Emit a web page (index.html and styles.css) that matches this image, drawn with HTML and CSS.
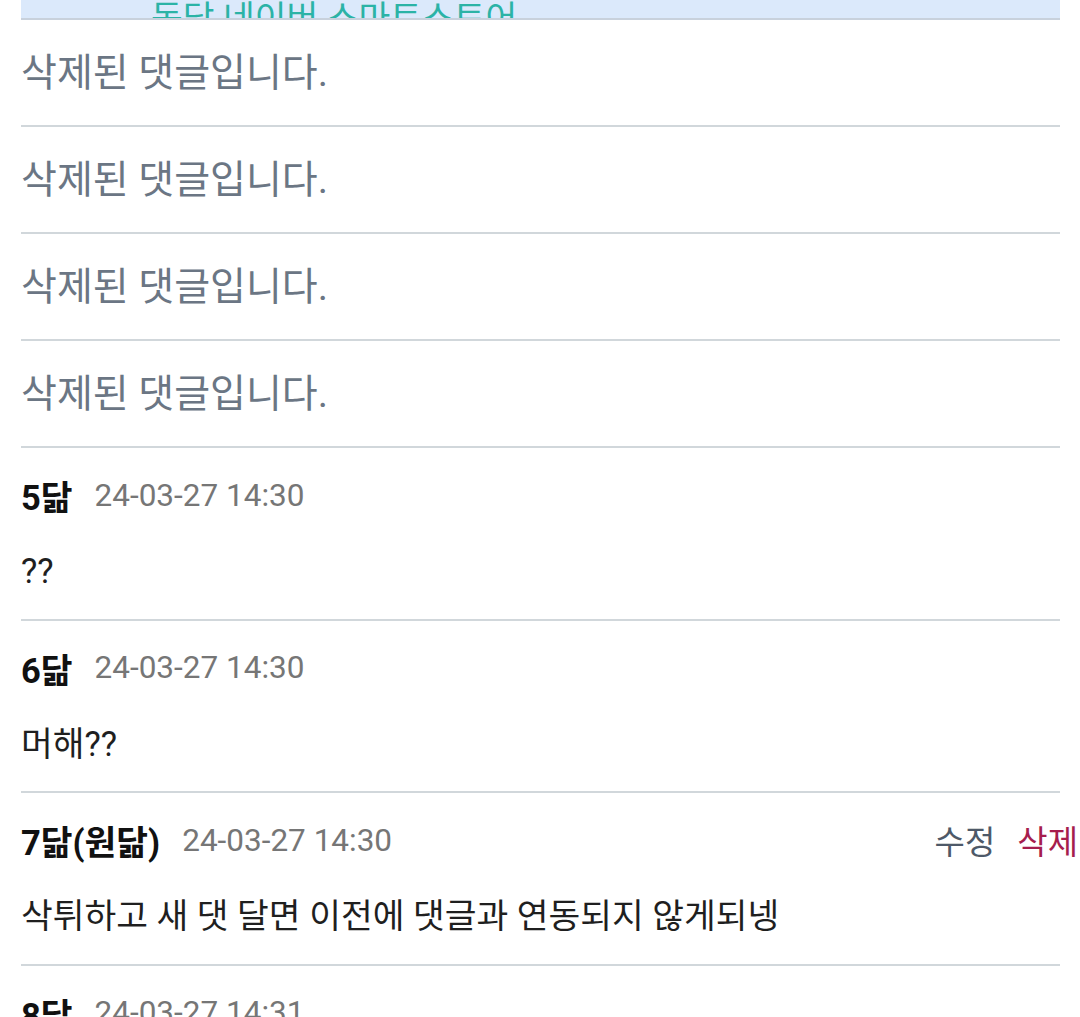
FILE: index.html
```html
<!DOCTYPE html>
<html lang="ko">
<head>
<meta charset="utf-8">
<link rel="stylesheet" href="styles.css">
</head>
<body>
<div class="wrap">
  <div class="quote"><span class="quote-text">동담 네이버 스마트스토어</span></div>
  <div class="deleted">삭제된 댓글입니다.</div>
  <div class="deleted">삭제된 댓글입니다.</div>
  <div class="deleted">삭제된 댓글입니다.</div>
  <div class="deleted">삭제된 댓글입니다.</div>
  <div class="comment">
    <div class="head"><span class="name">5닮</span><span class="time">24-03-27 14:30</span></div>
    <div class="body">??</div>
  </div>
  <div class="comment">
    <div class="head"><span class="name">6닮</span><span class="time">24-03-27 14:30</span></div>
    <div class="body">머해??</div>
  </div>
  <div class="comment">
    <div class="head"><span class="name">7닮(원닮)</span><span class="time">24-03-27 14:30</span>
      <span class="actions"><span class="edit">수정</span><span class="del">삭제</span></span></div>
    <div class="body">삭튀하고 새 댓 달면 이전에 댓글과 연동되지 않게되넹</div>
  </div>
  <div class="comment">
    <div class="head"><span class="name">8닮</span><span class="time">24-03-27 14:31</span></div>
    <div class="body"></div>
  </div>
</div>
</body>
</html>
```
FILE: styles.css
```css
html, body {
  margin: 0;
  padding: 0;
  background: #ffffff;
  overflow: hidden;
}
body {
  font-family: Roboto, "Noto Sans CJK KR", sans-serif;
  color: #1f1f1f;
}
.wrap {
  margin-left: 21px;
  width: 1039px;
}
.quote {
  height: 18px;
  background: #dbe9fb;
  border-bottom: 2px solid #c8d1dc;
  overflow: hidden;
  position: relative;
}
.quote-text {
  position: absolute;
  left: 130px;
  top: -2px;
  font-size: 34.5px;
  line-height: 40px;
  color: #2bb3a6;
  white-space: nowrap;
}
.deleted {
  height: 103px;
  padding-top: 2px;
  line-height: 103px;
  font-size: 39px;
  color: #6b7684;
  border-bottom: 2px solid #d1d7db;
}
.comment {
  padding: 27px 0 27.5px;
  border-bottom: 2px solid #d1d7db;
}
.head {
  display: flex;
  align-items: center;
  height: 40px;
}
.name {
  font-size: 34.5px;
  font-weight: 700;
  color: #111;
  margin-right: 22px;
}
.time {
  font-size: 31.5px;
  color: #767676;
}
.actions {
  margin-left: auto;
  margin-right: -18px;
  display: flex;
  gap: 22px;
  font-size: 33px;
}
.edit { color: #4e5968; }
.del { color: #a61d4d; }
.body {
  margin-top: 36px;
  height: 40px;
  line-height: 40px;
  font-size: 34.5px;
  color: #1f1f1f;
}
```
